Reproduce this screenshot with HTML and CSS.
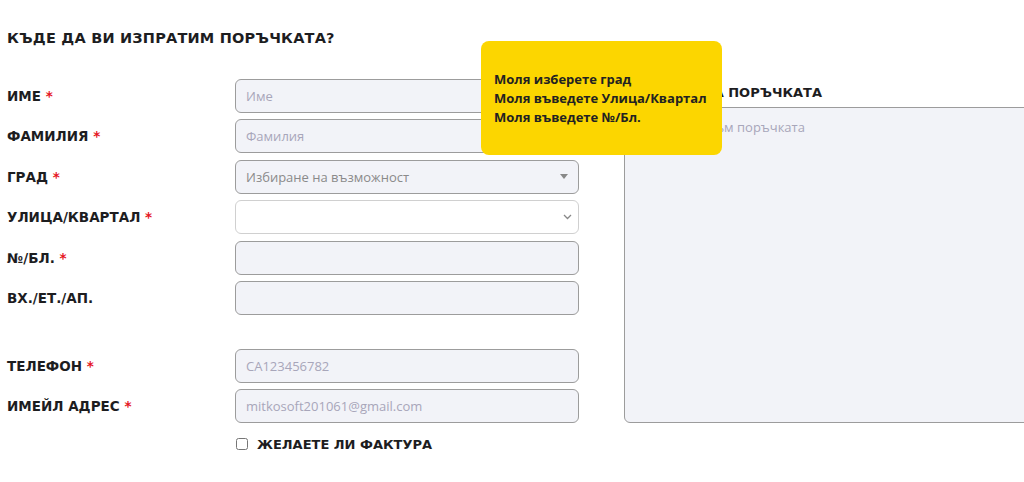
FILE: index.html
```html
<!DOCTYPE html>
<html lang="bg">
<head>
    <meta charset="UTF-8">
    <meta name="viewport" content="width=device-width, initial-scale=1.0">
    <title>Поръчка</title>
    <link rel="stylesheet" href="styles.css">
</head>
<body>
    <div class="checkout">
        <div class="shipping">
            <h2>Къде да ви изпратим поръчката?</h2>
            <div class="fields">
                <label class="field-label">Име <span class="req">*</span></label>
                <input type="text" class="field-input" placeholder="Име">

                <label class="field-label">Фамилия <span class="req">*</span></label>
                <input type="text" class="field-input" placeholder="Фамилия">

                <label class="field-label">Град <span class="req">*</span></label>
                <div class="field-input select-box">
                    <span class="select-text">Избиране на възможност</span>
                    <span class="select-caret"></span>
                </div>

                <label class="field-label">Улица/Квартал <span class="req">*</span></label>
                <div class="field-input select-native">
                    <svg class="chevron" width="9" height="6" viewBox="0 0 9 6"><path d="M1 1l3.5 3.5L8 1" fill="none" stroke="#888" stroke-width="1.3"/></svg>
                </div>

                <label class="field-label">№/Бл. <span class="req">*</span></label>
                <input type="text" class="field-input">

                <label class="field-label">Вх./Ет./Ап.</label>
                <input type="text" class="field-input">

                <div class="spacer"></div>
                <div class="spacer"></div>

                <label class="field-label">Телефон <span class="req">*</span></label>
                <input type="text" class="field-input" placeholder="CA123456782">

                <label class="field-label">Имейл адрес <span class="req">*</span></label>
                <input type="text" class="field-input" placeholder="mitkosoft201061@gmail.com">

                <div></div>
                <label class="invoice">
                    <input type="checkbox">
                    <span>Желаете ли фактура</span>
                </label>
            </div>
        </div>

        <div class="notes">
            <label class="notes-label">Бележки за поръчката</label>
            <textarea class="notes-input" placeholder="Забележка към поръчката"></textarea>
        </div>
    </div>

    <div class="tooltip">
        <p>Моля изберете град</p>
        <p>Моля въведете Улица/Квартал</p>
        <p>Моля въведете №/Бл.</p>
    </div>
</body>
</html>
```

FILE: styles.css
```css
body {
    margin: 0;
    background: #fff;
    font-family: "DejaVu Sans", sans-serif;
    color: #1d1d1f;
    overflow: hidden;
}
.checkout {
    display: flex;
    padding: 0 0 0 7px;
    width: 1100px;
}
.shipping {
    width: 572px;
}
.shipping h2 {
    margin: 29px 0 32px;
    font-size: 14.5px;
    font-weight: bold;
    text-transform: uppercase;
    letter-spacing: 0.2px;
    line-height: 18px;
}
.fields {
    display: grid;
    grid-template-columns: 228px 344px;
    row-gap: 6.4px;
    align-items: center;
}
.field-label {
    font-size: 13.5px;
    font-weight: bold;
    text-transform: uppercase;
}
.req {
    color: #e5141d;
}
.field-input {
    box-sizing: border-box;
    height: 34px;
    width: 344px;
    margin: 0;
    padding: 0 10px;
    background: #f2f3f8;
    border: 1px solid #9c9c9c;
    border-radius: 6px;
    font-family: "Open Sans", sans-serif;
    font-size: 13px;
    color: #333;
    outline: none;
}
.field-input::placeholder {
    color: #a8a6ba;
}
.select-box {
    display: flex;
    align-items: center;
    justify-content: space-between;
}
.select-text {
    color: #8a8a8a;
    font-size: 13px;
}
.select-caret {
    width: 0;
    height: 0;
    border-left: 4px solid transparent;
    border-right: 4px solid transparent;
    border-top: 5px solid #888;
}
.select-native {
    display: flex;
    align-items: center;
    justify-content: flex-end;
    background: #fff;
    border-color: #d0d0d0;
    padding-right: 6px;
}
.spacer {
    height: 21px;
}
.invoice {
    display: flex;
    align-items: center;
    gap: 9px;
    margin-top: 7px;
    font-size: 13px;
    font-weight: bold;
    text-transform: uppercase;
}
.invoice input {
    margin: 0 0 0 1px;
    width: 12px;
    height: 12px;
}
.notes {
    margin-left: 45px;
    padding-top: 85px;
    width: 460px;
    display: flex;
    flex-direction: column;
}
.notes-label {
    font-size: 13px;
    font-weight: bold;
    text-transform: uppercase;
    margin-bottom: 7px;
}
.notes-input {
    box-sizing: border-box;
    height: 316px;
    padding: 10px 12px;
    background: #f2f3f8;
    border: 1px solid #9c9c9c;
    border-radius: 6px;
    font-family: "Open Sans", sans-serif;
    font-size: 13px;
    resize: none;
}
.notes-input::placeholder {
    color: #a8a6ba;
}
.tooltip {
    position: absolute;
    left: 481px;
    top: 41px;
    width: 241px;
    height: 114px;
    box-sizing: border-box;
    padding: 29px 13px 0;
    background: #fcd600;
    border-radius: 8px;
    font-family: "Open Sans", sans-serif;
    font-size: 13px;
    font-weight: bold;
    color: #222;
}
.tooltip p {
    margin: 0;
    line-height: 19px;
}
```
